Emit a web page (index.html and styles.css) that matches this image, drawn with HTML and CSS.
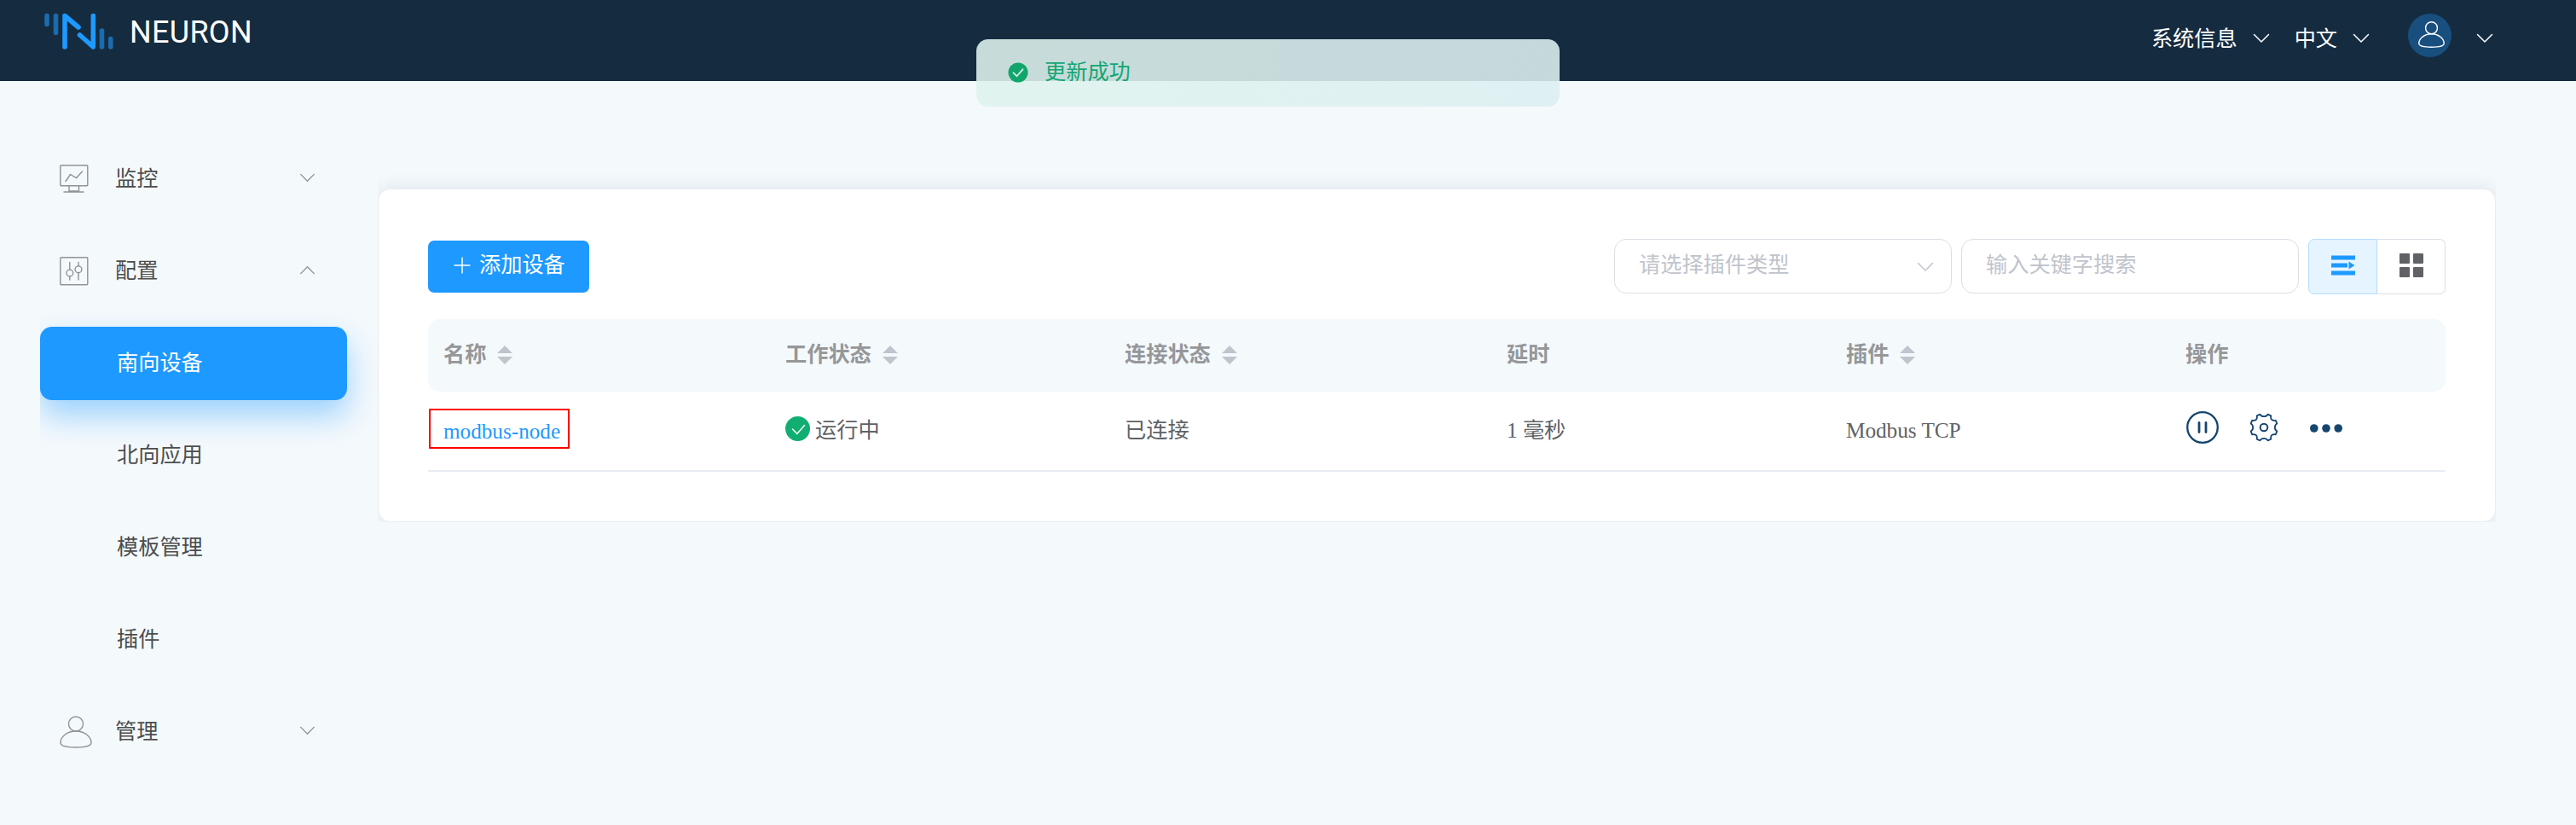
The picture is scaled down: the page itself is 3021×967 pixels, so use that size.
FILE: index.html
```html
<!DOCTYPE html>
<html lang="zh-CN">
<head>
<meta charset="utf-8">
<title>Neuron</title>
<link rel="stylesheet" href="styles.css">
</head>
<body>
<svg width="0" height="0" class="defs">
  <symbol id="chevron" viewBox="0 0 20 12"><path d="M1.5 1.5 10 10l8.500-8.500" fill="none" stroke="currentColor" stroke-width="1.500" stroke-linecap="round"/></symbol>
  <symbol id="person" viewBox="0 0 38 38"><g fill="none" stroke="currentColor"><circle cx="19" cy="9.500" r="8.500"/><path d="M19 18C8.500 18 1 25 1 31.500 1 35 8 37 19 37s18-2 18-5.500C37 25 29.500 18 19 18Z"/></g></symbol>
  <symbol id="sort" viewBox="0 0 18 22"><path d="M0 9 9 0l9 9ZM0 13h18l-9 9Z" fill="#c0c4cc"/></symbol>
</svg>

<header class="topbar">
  <div class="brand">
    <svg class="logo" viewBox="0 0 81 44">
      <g fill="none" stroke-width="5.600" stroke-linecap="round">
        <path stroke="#1b6cae" d="M3 3.500v10M13.500 3.500v20M67.500 21v19M77.800 30.500v9.500"/>
        <path stroke="#1e99ff" stroke-linejoin="round" d="M24 40V3.500L40 17M41.500 26 57.300 40V3.500"/>
      </g>
    </svg>
    <span class="brand-name">NEURON</span>
  </div>
  <nav class="top-nav">
    <span class="nav-text">系统信息</span><svg class="nav-chevron after-info"><use href="#chevron"/></svg>
    <span class="nav-text">中文</span><svg class="nav-chevron after-lang"><use href="#chevron"/></svg>
    <span class="avatar"><svg><use href="#person"/></svg></span>
    <svg class="nav-chevron"><use href="#chevron"/></svg>
  </nav>
</header>

<div class="toast">
  <svg viewBox="0 0 24 24"><circle cx="12" cy="12" r="11.500" fill="#10a66b"/><path d="m6.500 12.300 4 4 7-8" fill="none" stroke="#d5ebe4" stroke-width="1.800" stroke-linecap="round"/></svg>
  <span>更新成功</span>
</div>

<div class="layout">
  <aside class="sidebar">
    <div class="item">
      <svg class="item-icon" viewBox="0 0 34 34"><g fill="none" stroke="currentColor" stroke-width="1.400" stroke-linecap="round"><rect x=".8" y=".8" width="32" height="24" rx="1"/><path d="m7 19.500 5.500-8 7 4L26.500 8M11 24.500v7.500M22.500 24.500v7.500M5 32h23M11 31h11.500"/></g></svg>
      <span>监控</span><svg class="item-chevron"><use href="#chevron"/></svg>
    </div>
    <div class="item">
      <svg class="item-icon" viewBox="0 0 34 34"><g fill="none" stroke="currentColor" stroke-width="1.400" stroke-linecap="round"><rect x=".8" y=".8" width="32" height="32" rx="1"/><circle cx="11.800" cy="19" r="3.900"/><circle cx="22" cy="14.800" r="3.900"/><path d="M11.800 6.500v8.600M11.800 23v4M22 6.500v4.400M22 18.700V27"/></g></svg>
      <span>配置</span><svg class="item-chevron up"><use href="#chevron"/></svg>
    </div>
    <div class="item sub active">南向设备</div>
    <div class="item sub">北向应用</div>
    <div class="item sub">模板管理</div>
    <div class="item sub">插件</div>
    <div class="item">
      <svg class="item-icon person"><use href="#person"/></svg>
      <span>管理</span><svg class="item-chevron"><use href="#chevron"/></svg>
    </div>
  </aside>

  <main class="card">
    <div class="toolbar">
      <button class="add-btn"><svg viewBox="0 0 20 20"><path d="M10 .5v19M.5 10h19" stroke="#fff" stroke-width="1.500"/></svg><span>添加设备</span></button>
      <div class="filters">
        <div class="field"><span>请选择插件类型</span><svg><use href="#chevron"/></svg></div>
        <div class="field"><span>输入关键字搜索</span></div>
        <div class="view-switch">
          <span class="view on"><svg viewBox="0 0 28 28"><path d="M0 2.500h28v5H0ZM0 11.500h19v5H0ZM0 20.500h28v5H0ZM20.500 9.500 27.500 14l-7 4.500Z" fill="#1e99ff"/></svg></span>
          <span class="view"><svg viewBox="0 0 28 28"><g fill="#606266"><rect width="12" height="12" rx="1"/><rect x="16" width="12" height="12" rx="1"/><rect y="16" width="12" height="12" rx="1"/><rect x="16" y="16" width="12" height="12" rx="1"/></g></svg></span>
        </div>
      </div>
    </div>

    <div class="row head">
      <div>名称<svg class="sort"><use href="#sort"/></svg></div>
      <div>工作状态<svg class="sort"><use href="#sort"/></svg></div>
      <div>连接状态<svg class="sort"><use href="#sort"/></svg></div>
      <div>延时</div>
      <div>插件<svg class="sort"><use href="#sort"/></svg></div>
      <div>操作</div>
    </div>
    <div class="row body">
      <div class="name-cell"><a class="name">modbus-node</a><span class="highlight"></span></div>
      <div><svg class="ok" viewBox="0 0 29 29"><circle cx="14.500" cy="14.500" r="14.500" fill="#11ae72"/><path d="m8.500 15 5.300 5.500L22.500 10.500" fill="none" stroke="#fff" stroke-width="1.500" stroke-linecap="round"/></svg><span>运行中</span></div>
      <div>已连接</div>
      <div>1 毫秒</div>
      <div>Modbus TCP</div>
      <div class="actions">
        <svg class="pause" viewBox="0 0 38 38"><g fill="none" stroke="#16466f" stroke-linecap="round"><circle cx="19" cy="19" r="17.800" stroke-width="2.300"/><path d="M15 13.500v11M23 13.500v11" stroke-width="2.800"/></g></svg>
        <svg class="gear" viewBox="-17 -17 34 34"><g fill="none" stroke="#16466f" stroke-width="1.800" stroke-linejoin="round"><circle r="4.300" stroke-width="2"/><path d="M-4.600-15.300-8.300-13.700C-7.400-9.700-9.700-7.400-13.700-8.300L-15.300-4.600C-12-2.600-12 2.600-15.300 4.600L-13.700 8.300C-9.700 7.400-7.400 9.700-8.300 13.700L-4.600 15.300C-2.600 12 2.600 12 4.600 15.300L8.300 13.700C7.400 9.700 9.700 7.400 13.700 8.300L15.300 4.600C12 2.600 12-2.600 15.300-4.600L13.700-8.300C9.700-7.400 7.400-9.700 8.300-13.700L4.600-15.300C2.600-12-2.600-12-4.600-15.300Z"/></g></svg>
        <svg class="more" viewBox="0 0 38 10"><g fill="#16466f"><circle cx="4.800" cy="5" r="4.800"/><circle cx="19" cy="5" r="4.800"/><circle cx="33.200" cy="5" r="4.800"/></g></svg>
      </div>
    </div>
  </main>
</div>
</body>
</html>
```
FILE: styles.css
```css
* { box-sizing: border-box; }

body {
  margin: 0;
  min-height: 967px;
  background: #f4f9fc;
  color: #606266;
  font: 25.2px/36px "Liberation Serif", "Noto Sans CJK SC", serif;
}

svg { display: block; flex: none; }
.defs { position: absolute; }

/* Top bar */
.topbar {
  height: 95px;
  padding: 0 97px 0 52px;
  display: flex;
  justify-content: space-between;
  align-items: flex-start;
  background: #152b40;
  color: #fff;
}
.brand { display: flex; align-items: flex-start; padding-top: 15px; }
.logo { width: 81px; height: 44px; }
.brand-name {
  margin: 2px 0 0 19px;
  font: 36px/42px Roboto, sans-serif;
  letter-spacing: .3px;
}
.top-nav { display: flex; align-items: center; height: 90px; }
.nav-text { padding-top: 2px; line-height: 36px; }
.nav-chevron { width: 20px; height: 12px; margin-left: 18px; }
.after-info { margin-right: 29px; }
.after-lang { margin-right: 45px; }
.avatar {
  width: 51px;
  height: 51px;
  margin: 0 11px 8px 0;
  display: flex;
  align-items: center;
  justify-content: center;
  border-radius: 50%;
  background: #194f7e;
}
.avatar svg { width: 31px; height: 31px; margin: 0 0 2px 4px; stroke-width: 1.700; }

/* Message */
.toast {
  position: absolute;
  left: 1145px;
  top: 46px;
  width: 684px;
  height: 79px;
  padding: 0 36px 2px 37px;
  display: flex;
  align-items: center;
  gap: 19px;
  border-radius: 14px;
  background: linear-gradient(100deg, rgba(222, 243, 237, .885), rgba(220, 239, 241, .885));
  color: #14a672;
}
.toast svg { width: 24px; height: 24px; }

/* Sidebar */
.layout { display: flex; align-items: flex-start; }
.sidebar {
  width: 397px;
  margin-left: 47px;
  padding-top: 72px;
  display: flex;
  flex-direction: column;
  gap: 22px;
  color: #4d4d4d;
  clip-path: inset(0);
}
.item {
  width: 360px;
  height: 86px;
  padding: 0 37px 0 23px;
  display: flex;
  align-items: center;
}
.item-icon { width: 34px; height: 34px; margin-right: 31px; color: #8f9298; }
.item-icon.person { width: 38px; height: 38px; margin-right: 27px; stroke-width: 1.400; }
.item-chevron { width: 19px; height: 11px; margin: 0 0 3px auto; color: #909399; }
.item-chevron.up { transform: rotate(180deg); }
.sub { padding-left: 90px; }
.active {
  border-radius: 14px;
  background: #1e99ff;
  color: #fff;
  box-shadow: 0 18px 36px rgba(30, 153, 255, .42);
}

/* Card */
.card {
  width: 2482px;
  margin-top: 127px;
  padding: 58px;
  border-radius: 14px;
  background: #fff;
  box-shadow: 0 0 22px rgba(30, 50, 80, .12);
  clip-path: inset(-40px -1px -1px -1px);
}
.toolbar { display: flex; justify-content: space-between; align-items: center; height: 65px; }
.add-btn {
  width: 189px;
  height: 61px;
  padding: 0 0 4px 30px;
  display: flex;
  align-items: center;
  gap: 10px;
  border: 0;
  border-radius: 7px;
  background: #1e99ff;
  color: #fff;
  font: inherit;
}
.add-btn svg { width: 20px; height: 20px; }
.filters { display: flex; align-items: flex-start; gap: 11px; }
.field {
  width: 396px;
  height: 64px;
  padding: 0 20px 3px 28px;
  display: flex;
  justify-content: space-between;
  align-items: center;
  border: 1px solid #dcdfe6;
  border-radius: 14px;
  color: #c0c4cc;
}
.field svg { width: 20px; height: 12px; margin-top: 5px; }
.view-switch { display: flex; }
.view {
  width: 80px;
  height: 65px;
  padding-bottom: 4px;
  display: flex;
  align-items: center;
  justify-content: center;
  border: 1px solid #dcdfe6;
  border-left: 0;
  border-radius: 0 7px 7px 0;
}
.view svg { width: 28px; height: 28px; }
.view.on {
  width: 81px;
  border: 1px solid #b4ddff;
  border-radius: 7px 0 0 7px;
  background: #e6f4ff;
}

/* Table */
.row {
  display: grid;
  grid-template-columns: 401px 398px 448px 398px 398px 323px;
}
.row > div { display: flex; align-items: center; padding-left: 18px; }
.head {
  height: 85px;
  margin-top: 29px;
  padding-bottom: 2px;
  border-radius: 14px;
  background: #f4f9fc;
  color: #959799;
  font-weight: 700;
}
.sort { width: 18px; height: 22px; margin-left: 13px; }
.body { height: 94px; border-bottom: 2px solid #e9ebf5; }
.name-cell { position: relative; }
.name { color: #1e99ff; padding-top: 1px; }
.highlight {
  position: absolute;
  left: 1px;
  top: 20px;
  width: 165px;
  height: 47px;
  border: 2px solid #f00;
  border-radius: 1px;
}
.ok { width: 29px; height: 29px; margin: 0 6px 5px 0; }
.row .actions { padding: 0 0 8px 19px; }
.pause { width: 38px; height: 38px; }
.gear { width: 34px; height: 34px; margin-left: 36px; }
.more { width: 38px; height: 10px; margin: 1px 0 0 37px; }
```
